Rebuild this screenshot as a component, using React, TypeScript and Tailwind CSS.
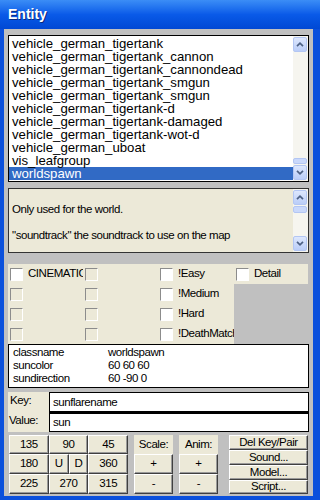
import React from "react";

const entities = [
  "vehicle_german_tigertank",
  "vehicle_german_tigertank_cannon",
  "vehicle_german_tigertank_cannondead",
  "vehicle_german_tigertank_smgun",
  "vehicle_german_tigertank_smgun",
  "vehicle_german_tigertank-d",
  "vehicle_german_tigertank-damaged",
  "vehicle_german_tigertank-wot-d",
  "vehicle_german_uboat",
  "vis_leafgroup",
  "worldspawn",
];

const props = [
  ["classname", "worldspawn"],
  ["suncolor", "60 60 60"],
  ["sundirection", "60 -90 0"],
];

function ScrollBtn({ dir }: { dir: "up" | "down" }) {
  return (
    <div className="w-[14px] h-[15px] rounded-[2px] border border-[#b3c6f3] bg-gradient-to-b from-[#dde7fd] to-[#bacdf8] flex items-center justify-center">
      <svg width="8" height="5" viewBox="0 0 8 5">
        <path d={dir === "up" ? "M1 4.2 L4 1.2 L7 4.2" : "M1 0.8 L4 3.8 L7 0.8"} stroke="#4d6185" strokeWidth="1.7" fill="none" />
      </svg>
    </div>
  );
}

function Checkbox({ white }: { white?: boolean }) {
  return (
    <div
      className={`w-[13px] h-[13px] shrink-0 border border-t-[#8c8c8c] border-l-[#8c8c8c] border-b-white border-r-white ${
        white ? "bg-white" : "bg-[#ece9d8]"
      }`}
    />
  );
}

function Btn({ children, className = "" }: { children?: React.ReactNode; className?: string }) {
  return (
    <div
      className={`bg-[#ece9d8] border border-t-white border-l-white border-b-[#404040] border-r-[#404040] shadow-[inset_-1px_-1px_0_#9a9a9a] flex items-center justify-center ${className}`}
    >
      {children}
    </div>
  );
}

export default function App() {
  const flags: [string, boolean][][] = [
    [["CINEMATIC", true], ["", false], ["!Easy", true], ["Detail", true]],
    [["", false], ["", false], ["!Medium", true]],
    [["", false], ["", false], ["!Hard", true]],
    [["", false], ["", false], ["!DeathMatch", true]],
  ];

  return (
    <div
      className="w-[320px] h-[500px] flex flex-col bg-[#0b50dc] text-black text-[11.5px] tracking-[-0.45px] overflow-hidden"
      style={{ fontFamily: '"Liberation Sans", Arial, sans-serif' }}
    >
      <div className="h-[29px] shrink-0 flex items-center pl-[8px] bg-gradient-to-b from-[#3b8df6] via-[#0a5ae8] to-[#0048d4]">
        <span className="text-white font-bold text-[14px] tracking-normal [text-shadow:1px_1px_0_#0a2a80]">Entity</span>
      </div>

      <div className="flex-1 ml-[4px] mr-[7px] mb-[4px] bg-[#c0c0c0] px-[4px] pt-[6px] flex flex-col">
        {/* entity list */}
        <div className="h-[147px] border border-black bg-white flex text-[13.2px] tracking-normal">
          <div className="flex-1 pt-[1px]">
            {entities.map((e, i) => (
              <div
                key={i}
                className={`h-[13px] leading-[13px] pl-[3px] whitespace-nowrap ${
                  e === "worldspawn" ? "bg-[#316ac5] text-white" : ""
                }`}
              >
                {e}
              </div>
            ))}
          </div>
          <div className="w-[15px] bg-[#f6f5ef] flex flex-col justify-between pt-[1px] pb-[1px]">
            <ScrollBtn dir="up" />
            <div className="flex flex-col">
              <div className="w-[14px] h-[6px] rounded-[2px] border border-[#b3c6f3] bg-[#c9d8fb] mb-[1px]" />
              <ScrollBtn dir="down" />
            </div>
          </div>
        </div>

        {/* description */}
        <div className="mt-[6px] h-[65px] border border-[#333] bg-[#ece9d8] flex">
          <div className="flex-1 pt-[1px] pl-[3px] leading-[13px] whitespace-nowrap overflow-hidden">
            <div className="h-[13px]" />
            <div>Only used for the world.</div>
            <div className="h-[13px]" />
            <div>"soundtrack" the soundtrack to use on the map</div>
          </div>
          <div className="w-[15px] bg-[#f6f5ef] flex flex-col justify-between pt-[1px] pb-[1px]">
            <div className="flex flex-col">
              <ScrollBtn dir="up" />
              <div className="w-[14px] h-[7px] rounded-[2px] border border-[#b3c6f3] bg-[#c9d8fb] mt-[1px]" />
            </div>
            <ScrollBtn dir="down" />
          </div>
        </div>

        {/* spawnflags */}
        <div className="mt-[11px] flex flex-col">
          {flags.map((row, r) => (
            <div key={r} className="flex h-[20px]">
              {row.map(([label, white], c) => (
                <div
                  key={c}
                  className={`bg-[#ece9d8] flex items-center pl-[2px] overflow-hidden ${
                    c === 3 ? "w-[74px]" : c === 2 ? "w-[76px]" : "w-[75px]"
                  }`}
                >
                  <Checkbox white={white} />
                  {label && <span className="ml-[5px] whitespace-nowrap">{label}</span>}
                </div>
              ))}
            </div>
          ))}
        </div>

        {/* key/value list */}
        <div className="h-[44px] border border-black bg-white pt-[1px] pl-[4px]">
          {props.map(([k, v]) => (
            <div key={k} className="flex h-[13px] leading-[13px]">
              <span className="w-[95px]">{k}</span>
              <span>{v}</span>
            </div>
          ))}
        </div>

        <div className="mt-[4px] flex flex-col">
          <div className="flex h-[20px]">
            <span className="w-[41px] pl-[2px] bg-[#ece9d8] leading-[16px]">Key:</span>
            <div className="flex-1 h-[20px] border border-black bg-white pl-[3px] leading-[18px]">sunflarename</div>
          </div>
          <div className="flex h-[20px]">
            <span className="w-[41px] pl-[1px] bg-[#ece9d8] leading-[16px]">Value:</span>
            <div className="flex-1 h-[20px] border border-black border-t-2 bg-white pl-[3px] leading-[17px]">sun</div>
          </div>
        </div>

        {/* buttons */}
        <div className="mt-[3px] flex">
          <div className="ml-[1px] w-[119px] grid grid-cols-3 grid-rows-[19px_20px_20px]">
            <Btn>135</Btn>
            <Btn>90</Btn>
            <Btn>45</Btn>
            <Btn>180</Btn>
            <div className="flex">
              <Btn className="flex-1">U</Btn>
              <Btn className="flex-1">D</Btn>
            </div>
            <Btn>360</Btn>
            <Btn>225</Btn>
            <Btn>270</Btn>
            <Btn>315</Btn>
          </div>
          <div className="ml-[6px] w-[39px] grid grid-rows-[19px_20px_20px]">
            <div className="bg-[#ece9d8] flex items-center justify-center">Scale:</div>
            <Btn>+</Btn>
            <Btn>-</Btn>
          </div>
          <div className="ml-[6px] w-[39px] grid grid-rows-[19px_20px_20px]">
            <div className="bg-[#ece9d8] flex items-center justify-center">Anim:</div>
            <Btn>+</Btn>
            <Btn>-</Btn>
          </div>
          <div className="ml-[11px] w-[79px] grid grid-rows-[15px_15px_15px_14px]">
            <Btn>Del Key/Pair</Btn>
            <Btn>Sound...</Btn>
            <Btn>Model...</Btn>
            <Btn>Script...</Btn>
          </div>
        </div>
      </div>
    </div>
  );
}
